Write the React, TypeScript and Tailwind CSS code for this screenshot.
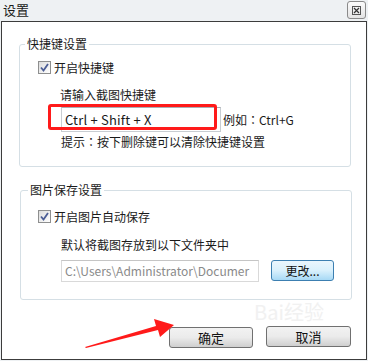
function CheckBox() {
  return (
    <span className="flex h-[13px] w-[13px] items-center justify-center border border-[#8e8f8f] bg-gradient-to-br from-[#dcdcdc] to-[#ffffff]">
      <svg width="9" height="9" viewBox="0 0 9 9">
        <path d="M1 4.5 L3.5 7.5 L8 1" fill="none" stroke="#4b5d95" strokeWidth="1.8" />
      </svg>
    </span>
  )
}

function WinButton({ label, className }: { label: string; className: string }) {
  return (
    <button
      className={`flex h-[21px] items-center justify-center rounded-[3px] border border-[#707070] bg-gradient-to-b from-[#f2f2f2] via-[#ebebeb] to-[#cfcfcf] text-[13px] leading-[13px] text-[#111] ${className}`}
    >
      {label}
    </button>
  )
}

// full-width colon centred, as the Windows UI font draws it
function Colon() {
  return <span style={{ fontFamily: '"Noto Sans CJK TC", sans-serif' }}>：</span>
}

export default function App() {
  return (
    <div
      className="relative h-[361px] w-[368px] overflow-hidden bg-[#eef1f3] text-[12px] text-[#1a1a1a]"
      style={{ fontFamily: '"Noto Sans CJK SC", "Noto Sans", sans-serif' }}
    >
      {/* title bar */}
      <div className="flex h-[21px] items-start justify-between">
        <span className="ml-[3px] mt-[3px] text-[13px] leading-[13px]">设置</span>
        <button className="mr-[2px] mt-[1px] flex h-[18px] w-[19px] items-center justify-center rounded-[3px] border border-[#8a8a8a] bg-gradient-to-b from-[#fbfbfb] to-[#e4e4e4]">
          <svg width="9" height="9" viewBox="0 0 9 9">
            <rect x="0.5" y="0.5" width="8" height="8" fill="none" stroke="#555" />
            <path d="M2 2 L7 7 M7 2 L2 7" stroke="#333" strokeWidth="1.2" />
          </svg>
        </button>
      </div>

      {/* body */}
      <div className="ml-[1px] h-[339px] w-[366px] border border-[#3c3c3c] bg-white">
        <fieldset className="ml-[17px] mt-[16px] h-[129px] w-[332px] rounded-[3px] border border-[#d5dfe5]">
          <legend className="ml-[5px] px-[2px] leading-[12px]">快捷键设置</legend>
          <div className="ml-[18px] mt-[11px] flex h-[13px] items-center gap-[3px]">
            <CheckBox />
            <span className="leading-[12px]">开启快捷键</span>
          </div>
          <div className="ml-[40px] mt-[15px] leading-[12px]">请输入截图快捷键</div>
          <div className="relative ml-[41px] mt-[6px] flex items-center gap-[2px]">
            <div className="flex h-[25px] w-[160px] items-center border border-[#c8cdd2] border-t-[#abadb3] pl-[3px] text-[13px] tracking-[0.2px]">
              Ctrl + Shift + X
            </div>
            <span className="leading-[12px]">
              例如<Colon />Ctrl+G
            </span>
            <div className="absolute left-[-13px] top-[-3px] h-[26px] w-[169px] rounded-[3px] border-[3px] border-[#ff1a1a]" />
          </div>
          <div className="ml-[41px] mt-[4px] leading-[12px]">
            提示<Colon />按下删除键可以清除快捷键设置
          </div>
        </fieldset>

        <fieldset className="ml-[18px] mt-[17px] h-[116px] w-[332px] rounded-[3px] border border-[#d5dfe5]">
          <legend className="ml-[7px] px-[2px] leading-[12px]">图片保存设置</legend>
          <div className="ml-[17px] mt-[14px] flex h-[13px] items-center gap-[3px]">
            <CheckBox />
            <span className="leading-[12px]">开启图片自动保存</span>
          </div>
          <div className="ml-[40px] mt-[16px] leading-[12px]">默认将截图存放到以下文件夹中</div>
          <div className="ml-[40px] mt-[9px] flex items-start gap-[12px]">
            <div className="flex h-[22px] w-[198px] items-center overflow-hidden whitespace-nowrap border border-[#d9d9d9] border-t-[#c5c5c5] pl-[3px] text-[#8a8a8a]">
              C:\Users\Administrator\Documer
            </div>
            <button className="flex h-[21px] w-[63px] items-center justify-center rounded-[3px] border border-[#3c7fb1] bg-gradient-to-b from-[#eaf6fd] via-[#d9f0fc] to-[#a7d9f5] leading-[12px] text-[#111]">
              更改...
            </button>
          </div>
        </fieldset>

        <div className="mt-[27px] flex">
          <WinButton label="确定" className="ml-[167px] w-[84px]" />
          <WinButton label="取消" className="ml-[13px] mt-[-1px] w-[85px]" />
        </div>
      </div>

      {/* faint watermark */}
      <div className="pointer-events-none absolute left-[254px] top-[302px] text-[20px] leading-[20px] text-[#e4e4e4] opacity-50">
        Bai经验
      </div>

      {/* red annotation arrow */}
      <svg className="pointer-events-none absolute left-0 top-0" width="368" height="361">
        <polygon points="85,347 156,326 154,319 174,325 160,337 158,330 86,348" fill="#ff1a1a" />
      </svg>
    </div>
  )
}
